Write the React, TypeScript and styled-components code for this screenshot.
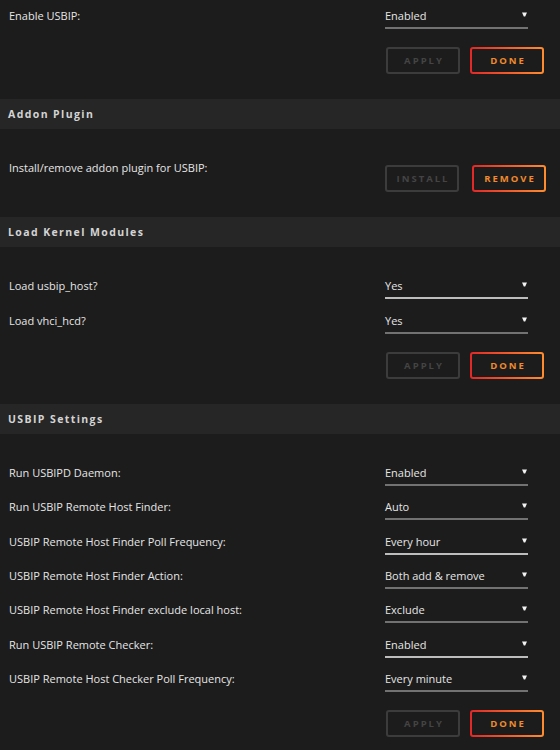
import React from 'react'
import styled, { createGlobalStyle } from 'styled-components'

const GlobalStyle = createGlobalStyle`
  html, body {
    margin: 0;
    padding: 0;
    background: #1c1c1c;
    color: #e0e0e0;
    font-family: 'Open Sans', 'DejaVu Sans', sans-serif;
    font-size: 11px;
    overflow: hidden;
  }
`

const Page = styled.div`
  width: 560px;
  height: 750px;
  overflow: hidden;
  background: #1c1c1c;
`

const Sheet = styled.div`
  margin-top: -23px;
`

const Header = styled.div`
  height: 30px;
  display: flex;
  align-items: center;
  padding-left: 8px;
  background: #262626;
  color: #d4d4d4;
  font-weight: 700;
  font-size: 10.5px;
  letter-spacing: 1.4px;
`

const Section = styled.section`
  padding: 21px 9px 25px;
`

const Row = styled.div`
  display: grid;
  grid-template-columns: 376px auto;
  align-items: start;
  min-height: 34.33px;
`

const Label = styled.div`
  line-height: 32.33px;
  padding-top: 2px;
  color: #e6e6e6;
  white-space: nowrap;
`

const Select = styled.div<{ $bright?: boolean }>`
  width: 143px;
  margin-top: 7px;
  display: flex;
  align-items: center;
  justify-content: space-between;
  line-height: 21px;
  padding-bottom: 1px;
  border-bottom: 2px solid ${(p) => (p.$bright ? '#bdbdbd' : '#727272')};
  color: #e6e6e6;
`

const Arrow = styled.svg`
  width: 5px;
  height: 5px;
  margin-right: 1px;
  margin-bottom: 2px;
`

const Actions = styled.div<{ $inline?: boolean; $gap?: number }>`
  display: flex;
  gap: ${(p) => p.$gap ?? 10}px;
  margin-top: 15px;
  padding-left: ${(p) => (p.$inline ? 0 : 377)}px;
`

const Button = styled.button<{ $primary?: boolean }>`
  width: 74px;
  height: 27px;
  box-sizing: border-box;
  border-radius: 3px;
  font-family: 'Open Sans', 'DejaVu Sans', sans-serif;
  font-weight: 700;
  font-size: 9.5px;
  letter-spacing: 2px;
  padding: 0 0 0 2px;
  cursor: pointer;
  color: ${(p) => (p.$primary ? '#f08a2c' : '#444444')};
  border: 2px solid transparent;
  background: ${(p) =>
    p.$primary
      ? 'linear-gradient(#1c1c1c, #1c1c1c) padding-box, linear-gradient(90deg, #e22828, #ff8c2f) border-box'
      : 'linear-gradient(#1c1c1c, #1c1c1c) padding-box, linear-gradient(#3c3c3c, #3c3c3c) border-box'};
`

function Dropdown({ value, bright }: { value: string; bright?: boolean }) {
  return (
    <Select $bright={bright}>
      <span>{value}</span>
      <Arrow viewBox="0 0 5 5">
        <path d="M0 0.5 L5 0.5 L3.2 4.5 L1.8 4.5 Z" fill="#f2f2f2" />
      </Arrow>
    </Select>
  )
}

function SettingRow({ label, value, bright }: { label: string; value: string; bright?: boolean }) {
  return (
    <Row>
      <Label>{label}</Label>
      <Dropdown value={value} bright={bright} />
    </Row>
  )
}

function ApplyDone() {
  return (
    <Actions>
      <Button disabled>APPLY</Button>
      <Button $primary>DONE</Button>
    </Actions>
  )
}

const usbipSettings = [
  { label: 'Run USBIPD Daemon:', value: 'Enabled' },
  { label: 'Run USBIP Remote Host Finder:', value: 'Auto' },
  { label: 'USBIP Remote Host Finder Poll Frequency:', value: 'Every hour', bright: true },
  { label: 'USBIP Remote Host Finder Action:', value: 'Both add & remove' },
  { label: 'USBIP Remote Host Finder exclude local host:', value: 'Exclude' },
  { label: 'Run USBIP Remote Checker:', value: 'Enabled', bright: true },
  { label: 'USBIP Remote Host Checker Poll Frequency:', value: 'Every minute' },
]

export default function App() {
  return (
    <Page>
      <GlobalStyle />
      <Sheet>
        <Section>
          <SettingRow label="Enable USBIP:" value="Enabled" />
          <ApplyDone />
        </Section>

        <Header>Addon Plugin</Header>
        <Section>
          <Row>
            <Label>Install/remove addon plugin for USBIP:</Label>
            <Actions $inline $gap={13}>
              <Button disabled>INSTALL</Button>
              <Button $primary>REMOVE</Button>
            </Actions>
          </Row>
        </Section>

        <Header>Load Kernel Modules</Header>
        <Section>
          <SettingRow label="Load usbip_host?" value="Yes" bright />
          <SettingRow label="Load vhci_hcd?" value="Yes" />
          <ApplyDone />
        </Section>

        <Header>USBIP Settings</Header>
        <Section>
          {usbipSettings.map((s) => (
            <SettingRow key={s.label} label={s.label} value={s.value} bright={s.bright} />
          ))}
          <ApplyDone />
        </Section>
      </Sheet>
    </Page>
  )
}
